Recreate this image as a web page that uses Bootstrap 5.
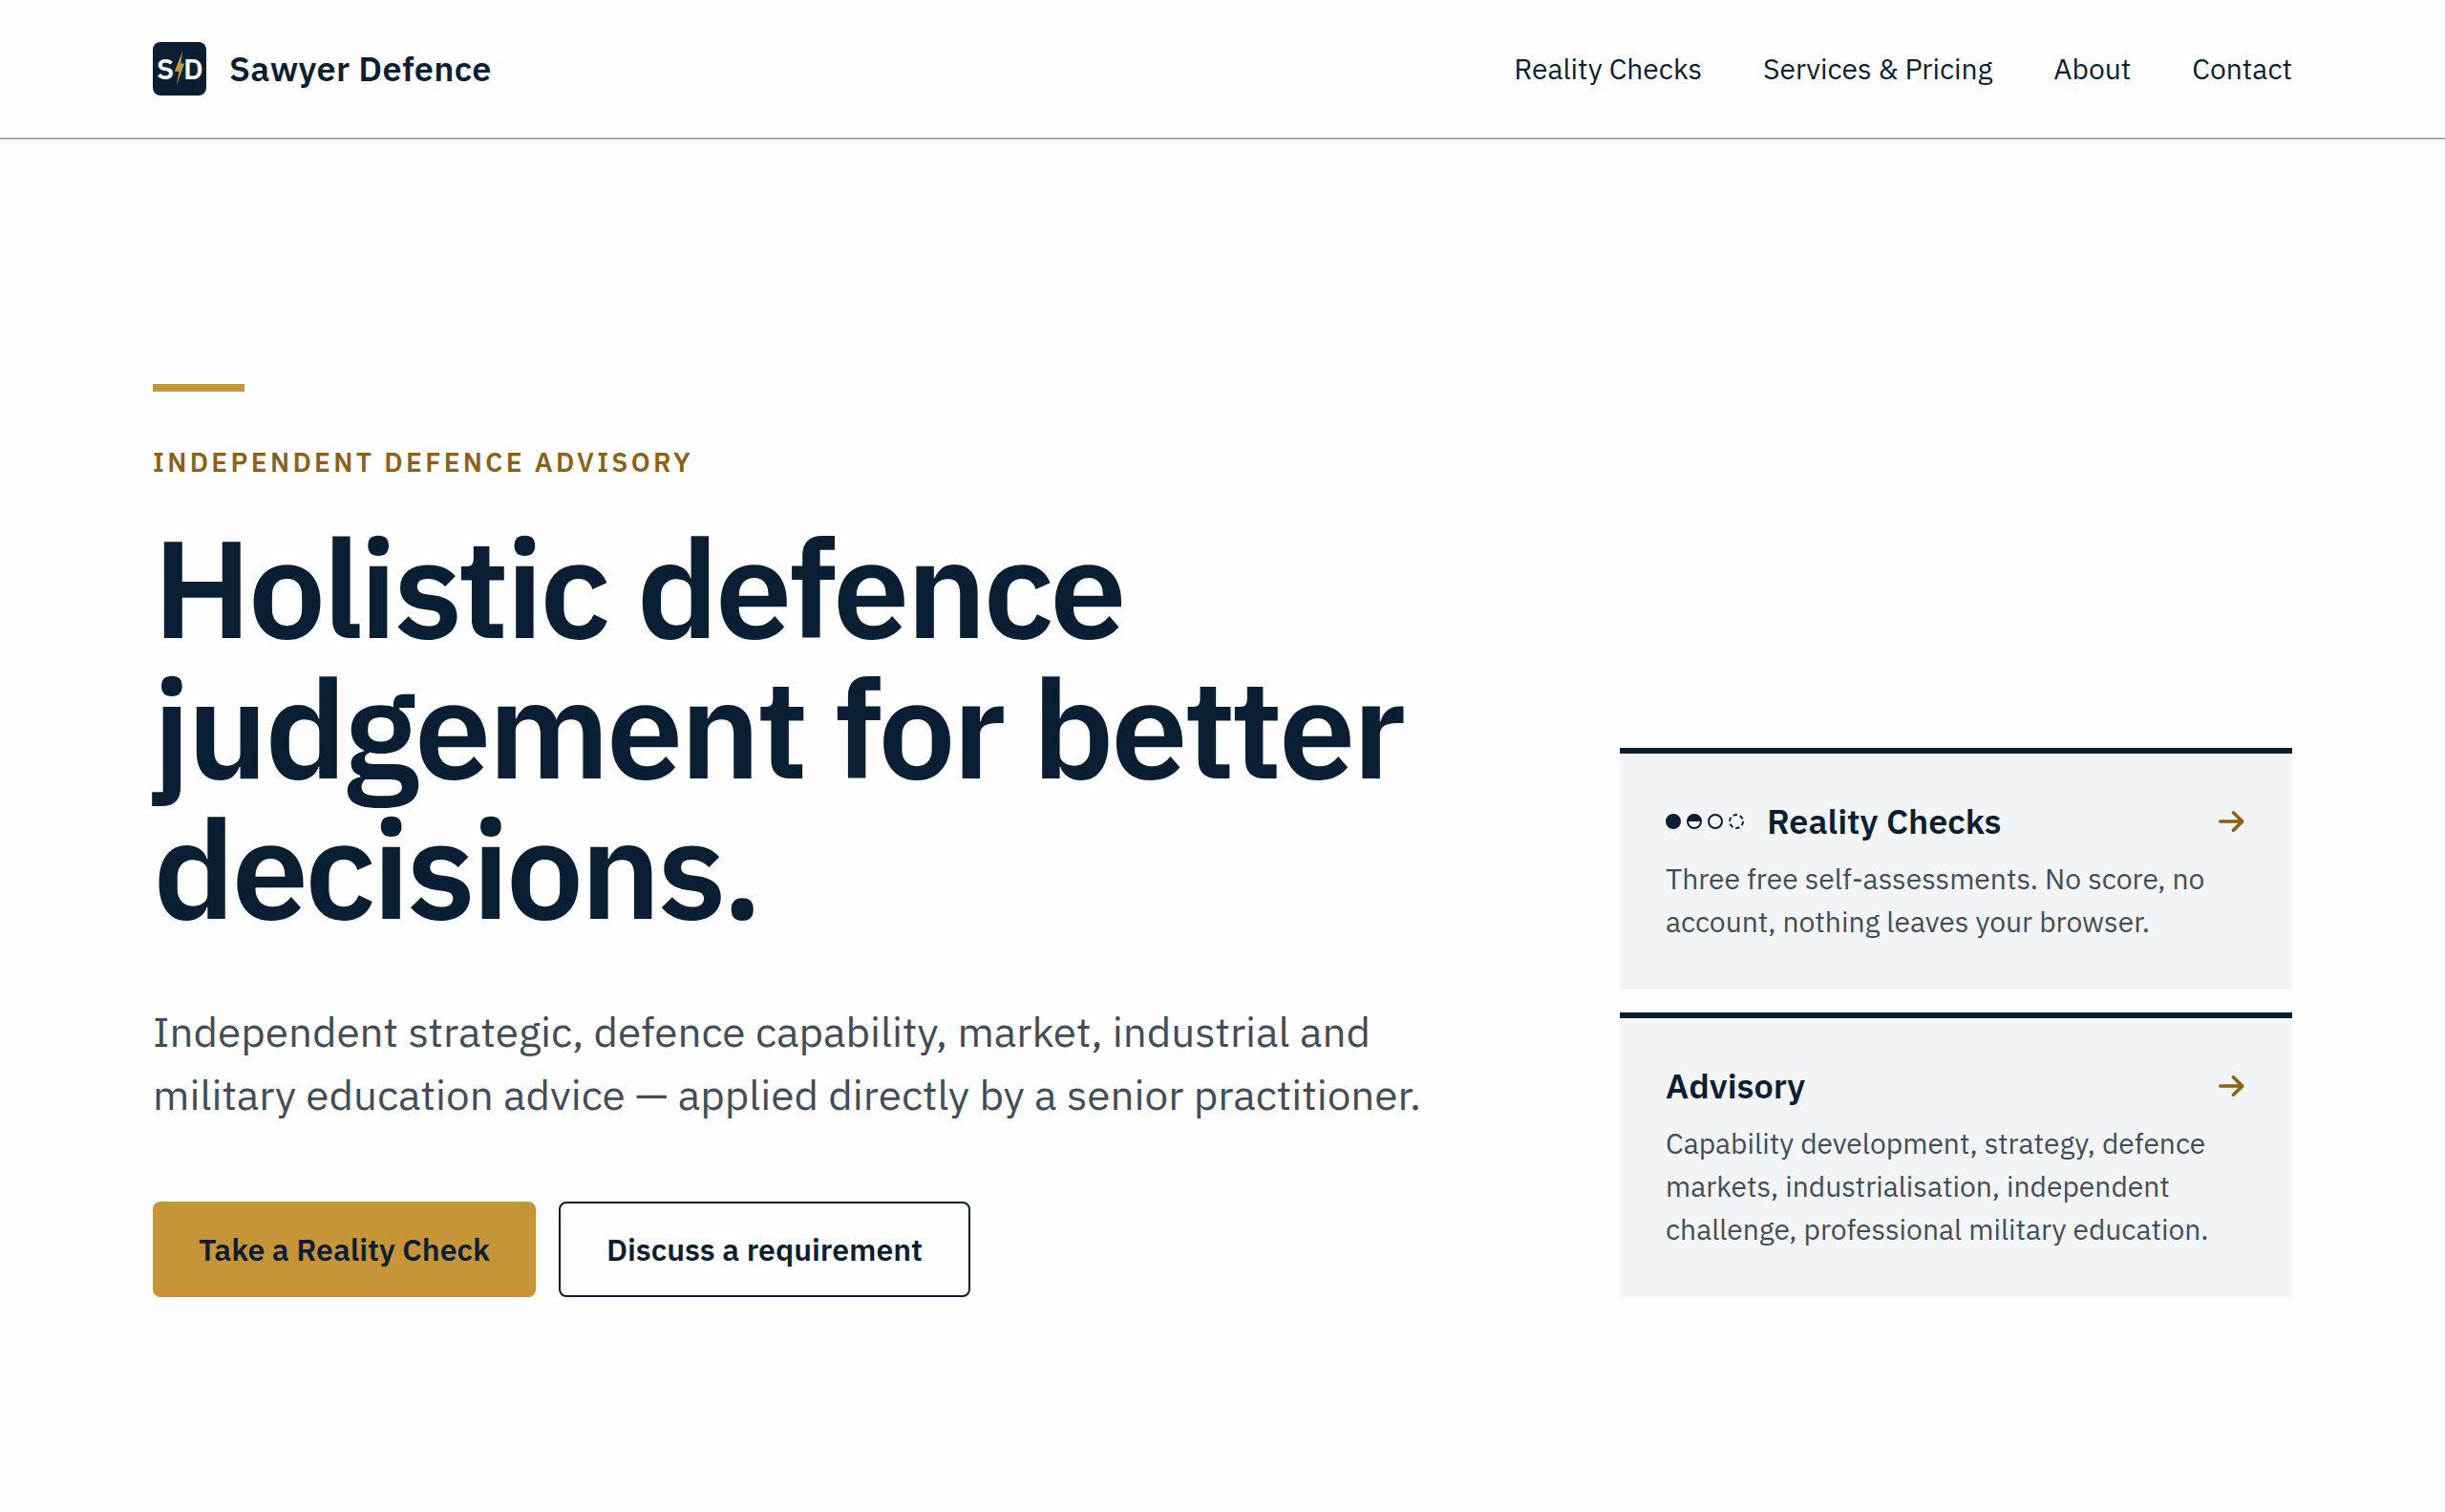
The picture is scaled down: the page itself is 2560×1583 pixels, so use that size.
<!DOCTYPE html>
<html lang="en">
<head>
<meta charset="utf-8">
<meta name="viewport" content="width=device-width, initial-scale=1">
<title>Sawyer Defence</title>
<link rel="stylesheet" href="https://cdn.jsdelivr.net/npm/bootstrap@5.3.0/dist/css/bootstrap.min.css">
<style>
  :root { --navy: #0a1f33; --gold: #c69538; --bronze: #8a6116; --slate: #434d57; --mist: #f2f4f6; }
  body { font-family: "IBM Plex Sans", Roboto, "Liberation Sans", sans-serif; font-size: 30px; line-height: 45px; color: var(--navy); background: #fefefe; }
  .page-gutter { padding-left: 160px; padding-right: 160px; }
  .site-header { height: 146px; border-bottom: 2px solid #a9adb1; }
  .site-header .nav { gap: 64px; }
  .site-header .nav-link { padding: 0; color: var(--navy); }
  .site-header .nav, .site-brand span { padding-bottom: 2px; }
  .site-brand { gap: 24px; font-size: 36px; font-weight: 600; letter-spacing: .01em; color: var(--navy); }
  .hero { padding-top: 256px; padding-bottom: 224px; border-bottom: 2px solid #f6f7f8; }
  .hero-grid { display: grid; grid-template-columns: minmax(0, 1fr) 704px; gap: 128px; align-items: end; }
  .accent-bar { width: 96px; height: 8px; margin-bottom: 53px; background: var(--gold); }
  .eyebrow { margin-bottom: 36px; font-size: 28px; line-height: 42px; font-weight: 600; letter-spacing: .12em; color: var(--bronze); }
  .hero h1 { margin-bottom: 65px; font-size: 144px; line-height: 147px; font-weight: 600; letter-spacing: -.025em; }
  .hero-lead { max-width: 1360px; margin-bottom: 79px; font-size: 44px; line-height: 66px; color: var(--slate); }
  .hero .btn { height: 100px; padding: 0 48px; border: 0; border-radius: 8px; font-size: 32px; font-weight: 600; color: var(--navy); }
  .hero .btn-gold { background: var(--gold); }
  .hero .btn-line { border: 2px solid var(--navy); }
  .path-card { padding: 48px 48px 49px; border-top: 6px solid var(--navy); background: var(--mist); color: var(--slate); }
  .path-head { margin-bottom: 15px; }
  .path-card h2 { font-size: 36px; line-height: 45px; font-weight: 600; color: var(--navy); }
</style>
</head>
<body>
<header class="site-header page-gutter d-flex align-items-center justify-content-between">
  <a class="site-brand d-flex align-items-center text-decoration-none" href="#">
    <svg width="56" height="56" viewBox="0 0 56 56" aria-hidden="true">
      <rect width="56" height="56" rx="8" fill="#0a1f33"/>
      <g fill="#fff" font-family="IBM Plex Sans, Roboto, sans-serif" font-weight="600" font-size="30" letter-spacing="0">
        <text x="4" y="39">S</text><text x="32" y="39">D</text>
      </g>
      <path d="M31.200 9.300 22.800 30.700H27.500L24.800 45.500 33.200 22.500H29.300Z" fill="#c69538"/>
    </svg>
    <span>Sawyer Defence</span>
  </a>
  <nav class="nav" aria-label="Main">
    <a class="nav-link" href="#">Reality Checks</a>
    <a class="nav-link" href="#">Services &amp; Pricing</a>
    <a class="nav-link" href="#">About</a>
    <a class="nav-link" href="#">Contact</a>
  </nav>
</header>
<main>
  <section class="hero page-gutter">
    <div class="hero-grid">
      <div>
        <div class="accent-bar"></div>
        <p class="eyebrow text-uppercase">Independent defence advisory</p>
        <h1>Holistic defence judgement for better decisions.</h1>
        <p class="hero-lead">Independent strategic, defence capability, market, industrial and military education advice — applied directly by a senior practitioner.</p>
        <div class="d-flex gap-4">
          <button type="button" class="btn btn-gold">Take a Reality Check</button>
          <button type="button" class="btn btn-line">Discuss a requirement</button>
        </div>
      </div>
      <div class="d-flex flex-column gap-4">
        <a class="path-card d-block text-decoration-none" href="#">
          <div class="path-head d-flex align-items-center gap-4">
            <svg width="82" height="16" viewBox="0 0 82 16" fill="none" stroke="#0a1f33" stroke-width="2" aria-hidden="true">
              <circle cx="8" cy="8" r="7" fill="#0a1f33"/>
              <circle cx="30" cy="8" r="7"/><path d="M23 8a7 7 0 0 1 14 0Z" fill="#0a1f33" stroke="none"/>
              <circle cx="52" cy="8" r="7"/>
              <circle cx="74" cy="8" r="7" stroke-dasharray="4.400 2.930"/>
            </svg>
            <h2 class="mb-0 me-auto">Reality Checks</h2>
            <svg width="32" height="32" viewBox="0 0 32 32" fill="none" stroke="#8a6116" stroke-width="3.600" stroke-linecap="round" stroke-linejoin="round" aria-hidden="true"><path d="M4.800 16H27.800M18.400 6.800 27.800 16 18.400 25.200"/></svg>
          </div>
          <p class="mb-0">Three free self-assessments. No score, no account, nothing leaves your browser.</p>
        </a>
        <a class="path-card d-block text-decoration-none" href="#">
          <div class="path-head d-flex align-items-center gap-4">
            <h2 class="mb-0 me-auto">Advisory</h2>
            <svg width="32" height="32" viewBox="0 0 32 32" fill="none" stroke="#8a6116" stroke-width="3.600" stroke-linecap="round" stroke-linejoin="round" aria-hidden="true"><path d="M4.800 16H27.800M18.400 6.800 27.800 16 18.400 25.200"/></svg>
          </div>
          <p class="mb-0">Capability development, strategy, defence markets, industrialisation, independent challenge, professional military education.</p>
        </a>
      </div>
    </div>
  </section>
</main>
<script src="https://cdn.jsdelivr.net/npm/bootstrap@5.3.0/dist/js/bootstrap.bundle.min.js"></script>
</body>
</html>
